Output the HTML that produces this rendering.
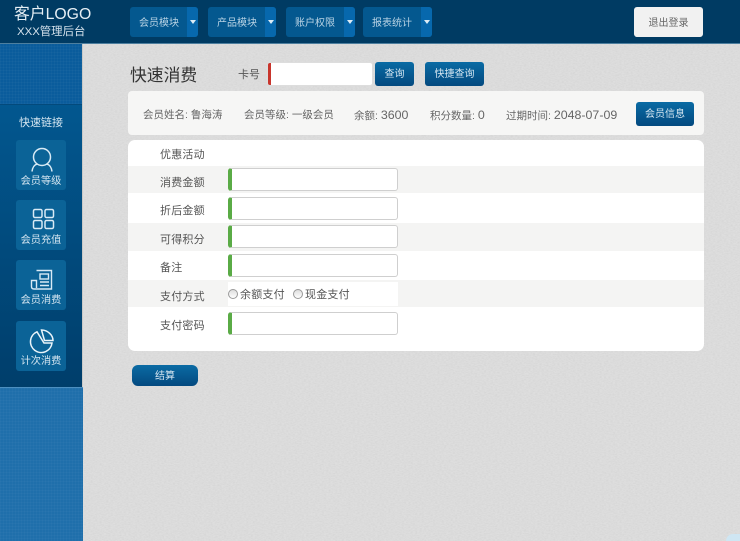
<!DOCTYPE html>
<html lang="zh"><head><meta charset="utf-8"><title>快速消费</title>
<style>
*{box-sizing:border-box}
html,body{margin:0;padding:0}
body{width:740px;height:541px;position:relative;overflow:hidden;background:#dedede;font-family:"Liberation Sans","Noto Sans CJK SC",sans-serif;color:#555}
.a{position:absolute;white-space:nowrap}
#tex{position:absolute;left:0;top:0}
.hdr{left:0;top:0;width:740px;height:44px;background:#003b63;border-bottom:1px solid #4d7f9f}
.nav{height:30px;top:7px;background:#04588f;border-radius:3px;color:#b9d3e4;font-size:10px;line-height:30px;overflow:hidden}
.nav b{position:absolute;right:0;top:0;width:11px;height:30px;background:#0768ad}
.nav b:after{content:"";position:absolute;left:3px;top:13px;border:3px solid transparent;border-top:4px solid #dcecf6}
.nav span{position:absolute;left:9px;top:2px}
.btn{background:linear-gradient(#0a6ba4,#03497f);border-radius:3px;color:#d6e6f1;font-size:10px;text-align:center;padding-top:2px}
.inp{left:228px;width:170px;height:23px;background:#fff;border:1px solid #cfcfcf;border-left:4px solid #5aab46;border-radius:3px}
.row{left:128px;width:576px;background:#f4f4f3}
.lb{left:160px;font-size:11px;letter-spacing:.2px;color:#555;line-height:14px}
.tile{left:16px;width:50px;height:50px;background:#0b6397;border-radius:3px;color:#d5e6f1;font-size:10.200px;text-align:center}
.tile span{position:absolute;left:0;width:50px;top:34px;line-height:13px}
.tile svg{position:absolute;left:0;top:0}
.dots{background-color:#0a5c9c;background-image:linear-gradient(rgba(255,255,255,.025) 1px,transparent 1px),linear-gradient(90deg,rgba(255,255,255,.025) 1px,transparent 1px);background-size:3px 3px}
.info{top:108px;font-size:10.500px;color:#666;line-height:14px}
.num{font-size:12.400px}
.radio{width:10px;height:10px;border-radius:50%;border:1px solid #999;background:linear-gradient(#ddd,#fff);top:289px}
</style></head><body>
<svg id="tex" width="740" height="541"><filter id="f" x="0" y="0" width="100%" height="100%"><feTurbulence type="fractalNoise" baseFrequency="0.45 1.1" numOctaves="2" seed="4"/><feColorMatrix values="0 0 0 0 .5  0 0 0 0 .5  0 0 0 0 .5  .5 0 0 0 -.17"/></filter><rect width="740" height="541" filter="url(#f)"/></svg>

<div class="a" style="left:726px;top:534px;width:14px;height:7px;background:#cfe6f3;border-radius:8px 0 0 0"></div>

<!-- sidebar -->
<div class="a" style="left:0;top:43px;width:83px;height:498px;background:#c9c9c7"></div>
<div class="a dots" style="left:0;top:43px;width:82px;height:61px"></div>
<div class="a" style="left:0;top:104px;width:82px;height:283px;background:linear-gradient(#02578f,#003e6b);border-top:1px solid #034a7c"></div>
<div class="a dots" style="left:0;top:387px;width:83px;height:154px;background-color:#1f6fab;border-top:1px solid #4d8fc0"></div>
<div class="a" style="left:0;top:116px;width:82px;text-align:center;font-size:11px;line-height:15px;color:#d5e6f1">快速链接</div>

<div class="a tile" style="top:140px"><svg width="50" height="34" fill="none" stroke="#d8eaf5" stroke-width="1.500"><circle cx="26" cy="17" r="8.500"/><path d="M16 31.500C16.500 27.500 18.500 24.500 21.500 24M36 31.500C35.500 27.500 33.500 24.500 30.500 24"/></svg><span style="top:35px">会员等级</span></div>
<div class="a tile" style="top:200px"><svg width="50" height="34" fill="none" stroke="#d8eaf5" stroke-width="1.500"><rect x="17.500" y="9.500" width="8.500" height="8" rx="1.500"/><rect x="29" y="9.500" width="8.500" height="8" rx="1.500"/><rect x="17.500" y="20.500" width="8.500" height="8" rx="1.500"/><rect x="29" y="20.500" width="8.500" height="8" rx="1.500"/></svg><span>会员充值</span></div>
<div class="a tile" style="top:260px"><svg width="50" height="34" fill="none" stroke="#d8eaf5" stroke-width="1.400"><path d="M20.500 10.500H35.500V29H18C16 29 15.500 28 15.500 26.500V20.500H20.500V28"/><rect x="24" y="14" width="8.500" height="5"/><path d="M24 22H33M24 25.500H33"/></svg><span>会员消费</span></div>
<div class="a tile" style="top:321px"><svg width="50" height="34" fill="none" stroke="#eaf4fa" stroke-width="1.500"><path d="M21 10.800A10.800 10.800 0 1 0 36 22H28L21 10.800Z"/><path d="M25.500 9C31.500 9 37 14 37 19.500H28.500L25.500 9Z"/></svg><span>计次消费</span></div>

<!-- header -->
<div class="a hdr"></div>
<div class="a" style="left:14px;top:6px;font-size:15.800px;line-height:18px;color:#e6eff5">客户LOGO</div>
<div class="a" style="left:17px;top:25px;font-size:11.400px;line-height:15px;color:#d5e2ec">XXX管理后台</div>
<div class="a nav" style="left:130px;width:68px"><span>会员模块</span><b></b></div>
<div class="a nav" style="left:208px;width:68px"><span>产品模块</span><b></b></div>
<div class="a nav" style="left:286px;width:69px"><span>账户权限</span><b></b></div>
<div class="a nav" style="left:363px;width:69px"><span>报表统计</span><b></b></div>
<div class="a" style="left:634px;top:7px;width:69px;height:30px;background:#f1f1f1;border-radius:3px;text-align:center;padding-top:2px;line-height:30px;font-size:10px;color:#666">退出登录</div>

<!-- search -->
<div class="a" style="left:130px;top:65px;font-size:16.800px;line-height:22px;color:#333">快速消费</div>
<div class="a" style="left:238px;top:68px;font-size:11px;line-height:15px;color:#555">卡号</div>
<div class="a" style="left:268px;top:63px;width:104px;height:22px;background:#fff;border-left:3px solid #c8352c;border-radius:2px;box-shadow:0 0 0 1px #ddd"></div>
<div class="a btn" style="left:375px;top:62px;width:39px;height:24px;line-height:22px">查询</div>
<div class="a btn" style="left:425px;top:62px;width:59px;height:24px;line-height:22px">快捷查询</div>

<!-- info -->
<div class="a" style="left:128px;top:91px;width:576px;height:44px;background:#f6f6f5;border-radius:4px"></div>
<div class="a info" style="left:143px">会员姓名: 鲁海涛</div>
<div class="a info" style="left:244px">会员等级: 一级会员</div>
<div class="a info" style="left:354px">余额: <span class="num">3600</span></div>
<div class="a info" style="left:430px">积分数量: <span class="num">0</span></div>
<div class="a info" style="left:506px">过期时间: <span class="num">2048-07-09</span></div>
<div class="a btn" style="left:636px;top:102px;width:58px;height:24px;line-height:22px">会员信息</div>

<!-- form -->
<div class="a" style="left:128px;top:140px;width:576px;height:211px;background:#fff;border-radius:7px"></div>
<div class="a row" style="top:166px;height:27px"></div>
<div class="a row" style="top:223px;height:28px"></div>
<div class="a row" style="top:280px;height:27px"></div>
<div class="a lb" style="top:148px">优惠活动</div>
<div class="a lb" style="top:176px">消费金额</div>
<div class="a lb" style="top:204px">折后金额</div>
<div class="a lb" style="top:233px">可得积分</div>
<div class="a lb" style="top:261px">备注</div>
<div class="a lb" style="top:290px">支付方式</div>
<div class="a lb" style="top:319px">支付密码</div>
<div class="a inp" style="top:168px"></div>
<div class="a inp" style="top:197px"></div>
<div class="a inp" style="top:225px"></div>
<div class="a inp" style="top:254px"></div>
<div class="a" style="left:228px;top:282px;width:170px;height:24px;background:#fff"></div>
<div class="a radio" style="left:228px"></div>
<div class="a lb" style="left:240px;top:288px">余额支付</div>
<div class="a radio" style="left:293px"></div>
<div class="a lb" style="left:305px;top:288px">现金支付</div>
<div class="a inp" style="top:312px"></div>

<div class="a btn" style="left:132px;top:365px;width:66px;height:21px;line-height:19px;border-radius:6px">结算</div>
</body></html>
